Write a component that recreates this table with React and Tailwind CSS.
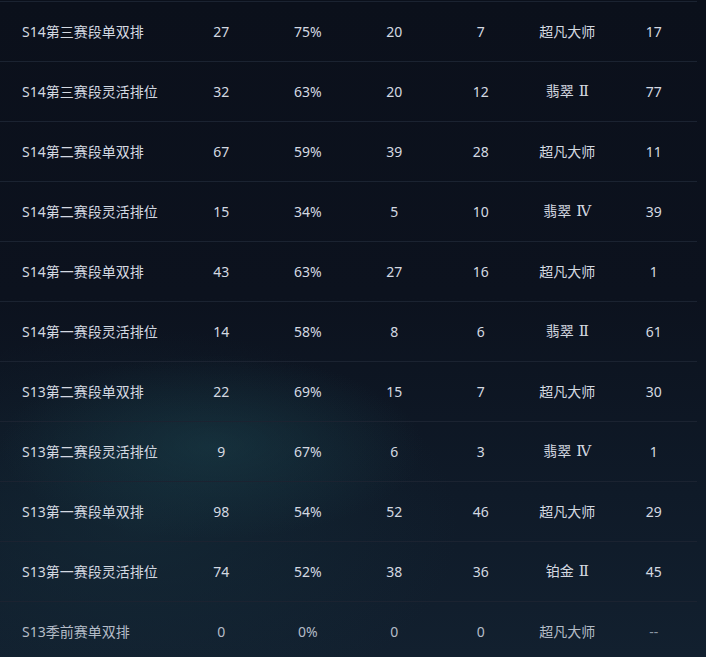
const rows = [
  ["S14第三赛段单双排", 27, "75%", 20, 7, "超凡大师", 17],
  ["S14第三赛段灵活排位", 32, "63%", 20, 12, "翡翠 Ⅱ", 77],
  ["S14第二赛段单双排", 67, "59%", 39, 28, "超凡大师", 11],
  ["S14第二赛段灵活排位", 15, "34%", 5, 10, "翡翠 Ⅳ", 39],
  ["S14第一赛段单双排", 43, "63%", 27, 16, "超凡大师", 1],
  ["S14第一赛段灵活排位", 14, "58%", 8, 6, "翡翠 Ⅱ", 61],
  ["S13第二赛段单双排", 22, "69%", 15, 7, "超凡大师", 30],
  ["S13第二赛段灵活排位", 9, "67%", 6, 3, "翡翠 Ⅳ", 1],
  ["S13第一赛段单双排", 98, "54%", 52, 46, "超凡大师", 29],
  ["S13第一赛段灵活排位", 74, "52%", 38, 36, "铂金 Ⅱ", 45],
  ["S13季前赛单双排", 0, "0%", 0, 0, "超凡大师", "--"],
];

// tier text: split off the roman numeral so it can use a serif face
function Tier({ text }) {
  const [name, num] = text.split(" ");
  if (!num) return text;
  return (
    <>
      {name}
      <span className="ml-[5px] font-['DejaVu_Serif','Liberation_Serif',serif] text-[15px]">
        {num}
      </span>
    </>
  );
}

export default function App() {
  return (
    <div
      className="h-[657px] w-[706px] overflow-hidden bg-[radial-gradient(ellipse_30%_14%_at_30%_68%,rgba(28,70,80,0.45)_0%,transparent_100%),radial-gradient(ellipse_45%_30%_at_20%_80%,rgba(22,50,62,0.45)_0%,transparent_100%),linear-gradient(180deg,#0b101b_0%,#0c121e_45%,#0f1a28_75%,#12202f_100%)] text-[14px] text-[#d4d9e1]"
      style={{ fontFamily: '"Noto Sans", "Noto Sans CJK SC", sans-serif' }}
    >
      <div className="mt-px w-[697px] border-t border-[#1b2331]">
        {rows.map((r, i) => {
          const last = i === rows.length - 1;
          return (
            <div
              key={r[0]}
              className={
                "grid h-[60px] grid-cols-[178px_repeat(6,1fr)] items-center border-b border-[#1b2331] " +
                (last ? "text-[#b4bcc7]" : "")
              }
            >
              <div className="pl-[22px] whitespace-nowrap">{r[0]}</div>
              {r.slice(1).map((c, j) => (
                <div
                  key={j}
                  className={
                    "text-center whitespace-nowrap " +
                    (last && j === 5 ? "text-[#8a95a3]" : "")
                  }
                >
                  {j === 4 ? <Tier text={c} /> : c}
                </div>
              ))}
            </div>
          );
        })}
      </div>
    </div>
  );
}
